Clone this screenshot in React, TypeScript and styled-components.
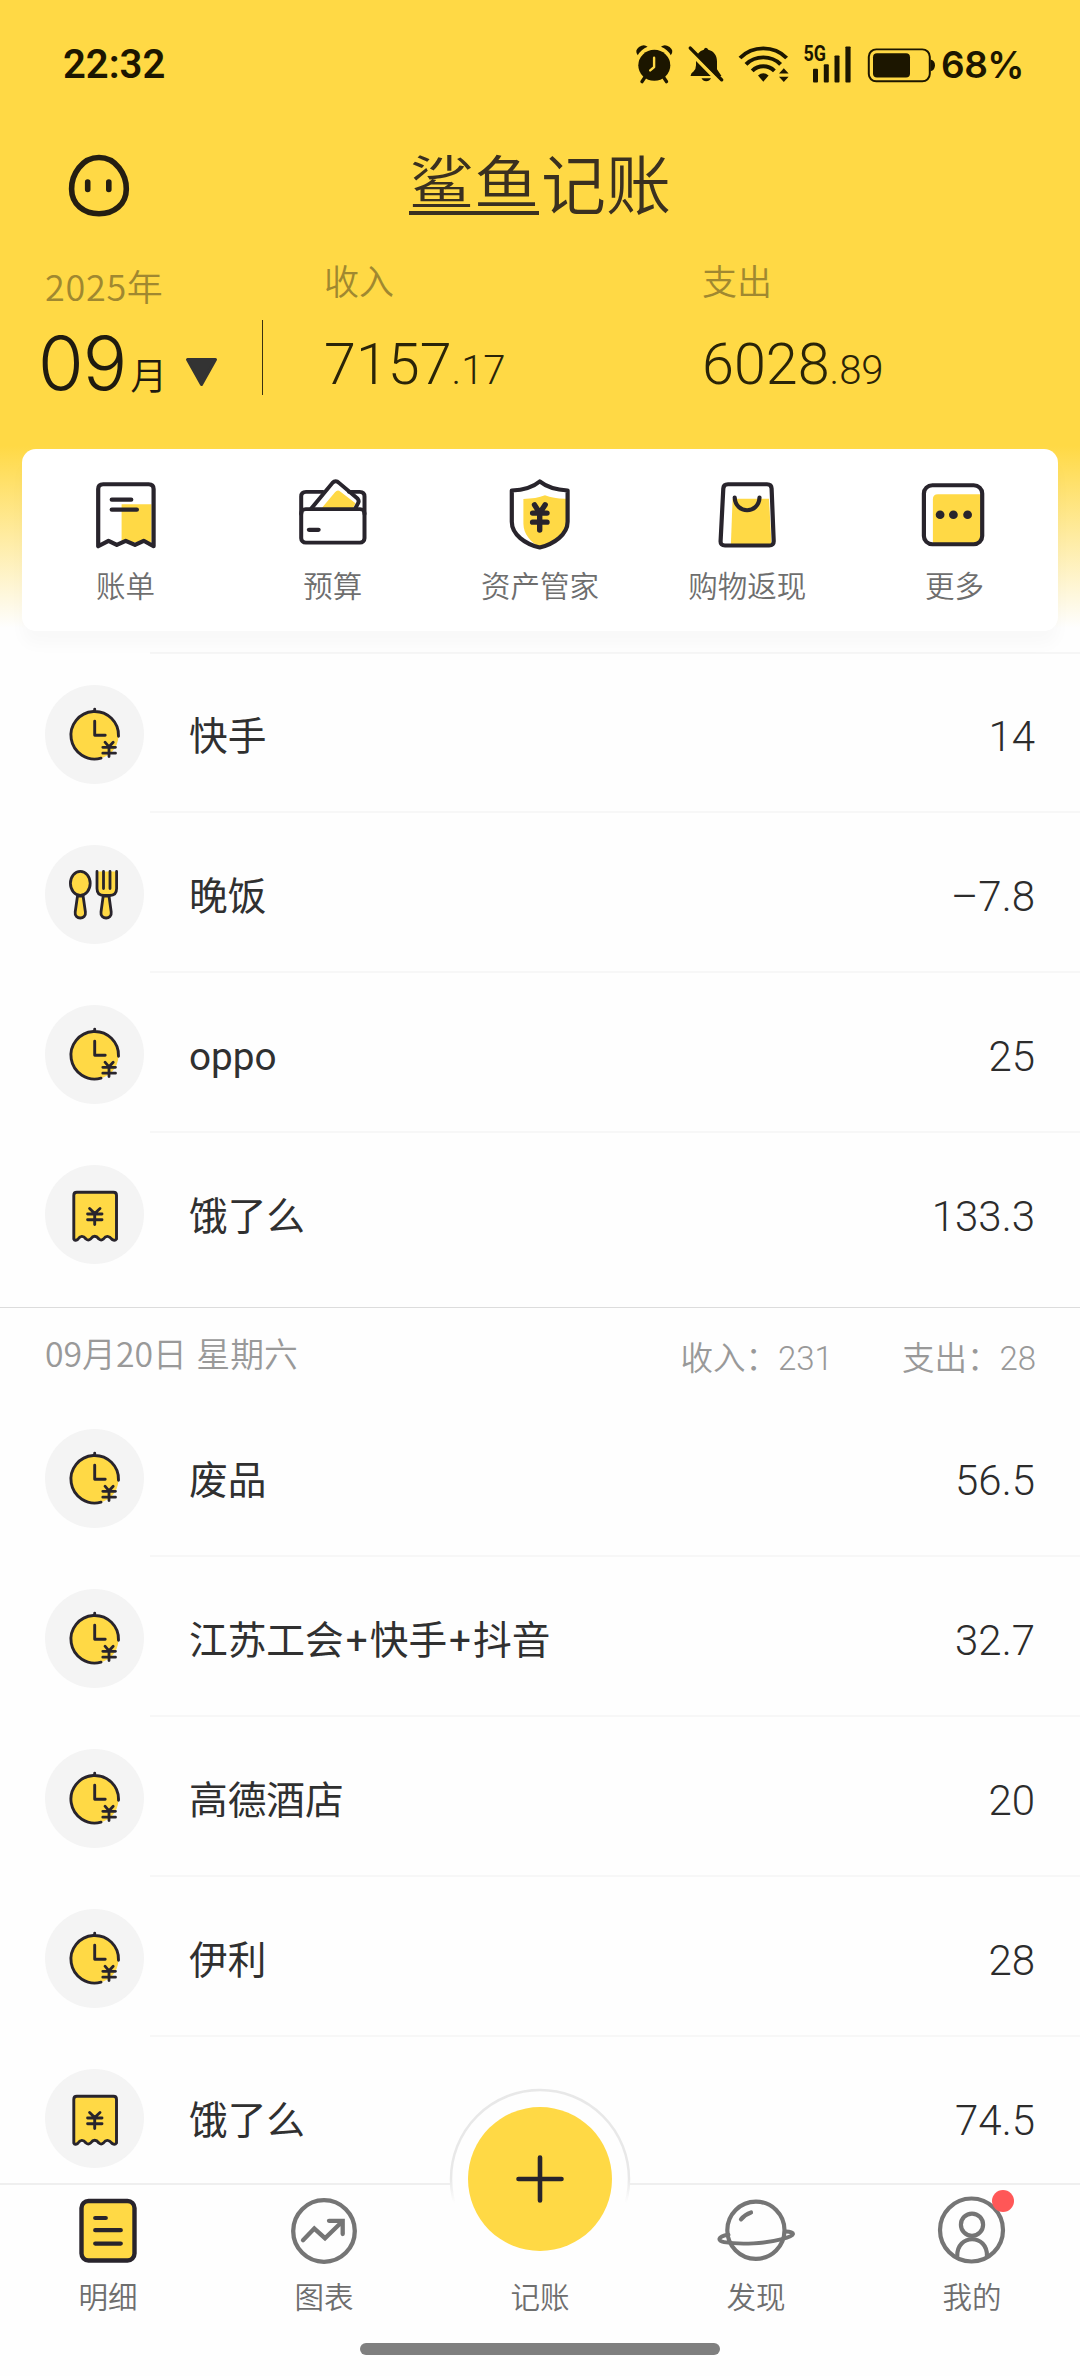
import React from "react";
import styled, { createGlobalStyle } from "styled-components";

const YELLOW = "#ffd945";
const INK = "#28242c";
const GREY = "#757575";
const CJK = `"Noto Sans CJK SC", sans-serif`;
const NUM = `Roboto, "Noto Sans CJK SC", sans-serif`;

const GlobalStyle = createGlobalStyle`
  * { box-sizing: border-box; }
  body { margin: 0; background: #fefefe; font-family: ${CJK}; }
  svg { display: block; flex: none; overflow: visible; }
`;

const Screen = styled.div`
  width: 1080px;
  height: 2376px;
  display: flex;
  flex-direction: column;
  overflow: hidden;
  background: #fefefe;
  color: #333;
`;

const Header = styled.header`
  flex: none;
  height: 631px;
  display: flex;
  flex-direction: column;
  background: linear-gradient(${YELLOW} 0, ${YELLOW} 446px, #fefefe 628px);
`;

const StatusBar = styled.div`
  height: 128px;
  padding: 0 58px 0 63px;
  display: flex;
  align-items: center;
  justify-content: space-between;
  color: #1c1600;
  font-family: ${NUM};
`;

const Clock = styled.span`
  padding-top: 1px;
  font-size: 40px;
  line-height: 44px;
  font-weight: 600;
`;

const StatusIcons = styled.div`
  display: flex;
  align-items: center;
  gap: 10px;
`;

const Percent = styled.span`
  margin-left: -5px;
  width: 81px;
  padding-top: 1px;
  font-family: Inter, sans-serif;
  font-size: 37px;
  line-height: 46px;
  font-weight: 600;
  letter-spacing: -0.5px;
  white-space: nowrap;
`;

const TitleBar = styled.div`
  height: 113px;
  padding: 0 67px;
  display: grid;
  grid-template-columns: 64px 1fr 64px;
  align-items: center;
`;

const Title = styled.h1`
  margin: 0 0 4px;
  display: flex;
  justify-content: center;
  font-size: 65px;
  line-height: 60px;
  font-weight: 350;
  color: #3a3020;
`;

const Underlined = styled.span`
  height: 64px;
  margin-right: 2px;
  border-bottom: 4px solid #3a3020;
`;

const Squat = styled.span`
  display: block;
  transform: scaleY(0.9);
  transform-origin: 50% 4px;
`;

const Summary = styled.div`
  height: 208px;
  display: grid;
  grid-template-columns: 262px 1px 61px 378px 1fr;
`;

const Caption = styled.div<{ $size: number; $spacing?: number }>`
  font-size: ${(p) => p.$size}px;
  letter-spacing: ${(p) => p.$spacing ?? 0}px;
  line-height: 48px;
  font-weight: 350;
  color: #a08830;
`;

const MonthPicker = styled.div`
  padding: 20px 0 0 45px;
`;

const MonthRow = styled.div`
  display: flex;
  align-items: baseline;
  margin: 14px 0 0 -7px;
  line-height: 80px;
  color: #1f1b10;
`;

const MonthNumber = styled.span`
  font-family: Inter, sans-serif;
  font-size: 74px;
  font-weight: 350;
  letter-spacing: -1px;
`;

const MonthUnit = styled.span`
  margin-left: 4px;
  font-size: 37px;
  font-weight: 350;
`;

const Caret = styled.svg`
  margin-left: 18px;
`;

const Rule = styled.div`
  height: 75px;
  margin-top: 79px;
  background: #3a3010;
`;

const Figure = styled.div`
  padding-top: 15px;
`;

const Money = styled.div`
  margin-top: 29px;
  font-family: ${NUM};
  font-size: 57.5px;
  line-height: 64px;
  font-weight: 300;
  color: #2a2408;
`;

const Cents = styled.span`
  font-size: 40px;
`;

const Card = styled.nav`
  flex: none;
  height: 182px;
  margin: 0 22px;
  padding-top: 30px;
  display: grid;
  grid-template-columns: repeat(5, 1fr);
  border-radius: 14px;
  background: #fff;
  box-shadow: 0 14px 16px rgba(0, 0, 0, 0.025);
  position: relative;
`;

const Shortcut = styled.div`
  display: flex;
  flex-direction: column;
  align-items: center;
  gap: 13px;
`;

const Label = styled.span`
  font-size: 29.5px;
  line-height: 44px;
  font-weight: 350;
  color: #6e6e6e;
`;

const List = styled.main`
  flex: 1;
  min-height: 0;
  overflow: hidden;
  padding-top: 22px;
`;

const Group = styled.section`
  padding-bottom: 14px;
  border-bottom: 1px solid #dcdcdc;
`;

const Row = styled.div`
  height: 160px;
  padding-left: 45px;
  display: flex;
`;

const Badge = styled.div`
  flex: none;
  width: 99px;
  height: 99px;
  margin-top: 32px;
  border-radius: 50%;
  background: #f4f4f4;
`;

const RowBody = styled.div`
  flex: 1;
  margin-left: 6px;
  padding: 0 45px 0 39px;
  display: flex;
  align-items: center;
  justify-content: space-between;
  border-bottom: 2px solid #f7f7f7;
  ${Row}:last-child > & { border-color: transparent; }
`;

const TopRule = styled.div`
  height: 2px;
  margin: -1px 0 -1px 150px;
  background: #f6f6f6;
`;

const Name = styled.span`
  padding-top: 9px;
  font-size: 38.7px;
  line-height: 56px;
  font-weight: 400;
  color: #303030;
  font-family: ${NUM};
`;

const Plus = styled.span`
  padding: 0 2px;
`;

const Amount = styled.span`
  padding-top: 9px;
  font-family: ${NUM};
  font-size: 42px;
  font-weight: 300;
  color: #2c2c2c;
`;

const DayHeader = styled.div`
  height: 89px;
  padding: 0 44px 0 45px;
  display: flex;
  align-items: center;
  color: #999;
  font-weight: 350;
`;

const DayName = styled.span`
  flex: 1;
  font-size: 33.8px;
  word-spacing: 2px;
`;

const DayTotal = styled.span`
  margin-left: 69px;
  padding-top: 5px;
  font-size: 32.5px;
`;

const DayValue = styled.span`
  font-family: ${NUM};
  font-size: 33px;
  font-weight: 300;
`;

const TabBar = styled.footer`
  flex: none;
  height: 193px;
  border-top: 2px solid #efefef;
  background: #fefefe;
  position: relative;
`;

const Tabs = styled.div`
  height: 158px;
  display: grid;
  grid-template-columns: repeat(5, 1fr);
`;

const Tab = styled.div`
  padding-top: 10px;
  display: flex;
  flex-direction: column;
  align-items: center;
  gap: 6px;
  position: relative;
`;

const AddButton = styled.div`
  height: 72px;
  width: 184px;
  position: relative;
  & > svg { position: absolute; left: 0; bottom: -4px; }
`;

const RedDot = styled.i`
  position: absolute;
  left: 128px;
  top: 5px;
  width: 22px;
  height: 22px;
  border-radius: 50%;
  background: #ff5757;
`;

const HomeIndicator = styled.div`
  width: 360px;
  height: 12px;
  margin: 0 auto;
  border-radius: 6px;
  background: #7f7f7f;
`;

const line = (w: number, color = INK) => ({
  fill: "none",
  stroke: color,
  strokeWidth: w,
  strokeLinecap: "round" as const,
  strokeLinejoin: "round" as const,
});

const status = (w: number) => ({
  width: w,
  height: 42.6,
  viewBox: `0 0 ${w} 44`,
  preserveAspectRatio: "none",
  fill: "#1c1600",
});

const shortcut = {
  width: 72,
  height: 70,
  viewBox: "0 0 72 72",
  preserveAspectRatio: "none",
};

const Alarm = () => (
  <svg {...status(42)}>
    <circle cx="20.3" cy="23.1" r="16" />
    <path d="M3.8 12.6Q.2 8 5 4.2Q10 .8 13.6 4Q7 7 3.8 12.6ZM36.8 12.6Q40.4 8 35.6 4.2Q30.6 .8 27 4Q33.6 7 36.8 12.6Z" />
    <path d="M10.5 36L8 40M30 36L32.5 40" {...line(3.4, "#1c1600")} />
    <path d="M20.1 15.2V24.9L16.2 28.3" {...line(2.4, YELLOW)} />
  </svg>
);

const Muted = () => (
  <svg {...status(41)}>
    <path d="M19.9 4.8Q21.8 5 22.3 7C28 8.4 31 13 31 19V27L35.5 34.2H4.5Q5 31 7.5 29.5Q10 27 10 23V17Q11 9 17.8 7Q18 5 19.9 4.8Z" />
    <path d="M15.5 36.5H25Q23.5 39.6 20.2 39.6Q17 39.6 15.5 36.5Z" />
    <path d="M-.5 4.5L32.5 39.5" {...line(4, YELLOW)} />
    <path d="M4.3 5.2L35.7 38" {...line(3.4, "#1c1600")} />
  </svg>
);

const Wifi = () => (
  <svg {...status(53)}>
    <g {...line(4, "#1c1600")} strokeLinecap="butt">
      <path d="M3 15.5Q12.5 5.6 26.3 5.6T49.6 15.5" />
      <path d="M9 22Q16 14.8 26.3 14.8T43.6 22" />
      <path d="M15.2 28.7Q20 24 26.3 24T37.4 28.7" />
    </g>
    <path d="M21 33.7Q26.3 28.6 31.6 33.7L26.3 40Z" />
    <path d="M42 31.4L46.8 26L51.6 31.4ZM42 34.8H51.6L46.8 40.4Z" />
  </svg>
);

const Signal = () => (
  <svg {...status(56)}>
    <text x="3.6" y="18.8" fontSize="22" fontWeight="700" fontFamily="Roboto, sans-serif" textLength="22.5" lengthAdjust="spacingAndGlyphs">5G</text>
    <rect x="13" y="26.6" width="5" height="14.2" rx="1" />
    <rect x="23.8" y="22" width="5" height="18.8" rx="1" />
    <rect x="34.5" y="12.8" width="5" height="28" rx="1" />
    <rect x="45.4" y="3.5" width="5.2" height="37.3" rx="1" />
  </svg>
);

const Battery = () => (
  <svg {...status(70)}>
    <rect x="2.8" y="6.6" width="61" height="33" rx="7.5" fill="none" stroke="#1c1600" strokeWidth="2" />
    <rect x="7" y="10.6" width="37" height="25" rx="4" />
    <path d="M64.5 17Q69 18 69 23.1T64.5 29.2Z" />
  </svg>
);

const Face = () => (
  <svg width="64" height="64" viewBox="0 0 64 66" preserveAspectRatio="none" {...line(5.6, "#241e12")}>
    <path d="M32 4.7C49 4.7 59.3 22 59.3 37C59.3 53 47 62.6 32 62.6C17 62.6 4.6 53 4.6 37C4.6 22 15 4.7 32 4.7Z" />
    <path d="M20.7 29.8V37.7M41.8 29.8V37.7" />
  </svg>
);

const Bill = () => (
  <svg {...shortcut}>
    <path d="M31.6 26H61.5V65H31.6Z" fill={YELLOW} />
    <path d="M8.2 69.2V10.4Q8.2 5.4 13.2 5.4H58.6Q63.6 5.4 63.6 10.4V69.2L53.7 63.6L45 67.8L35.7 63.6L26.8 67.8L18.5 63.6Z" {...line(4.2)} />
    <path d="M21.8 21.3H41.2M21.8 31.6H46.8" {...line(4.4)} />
  </svg>
);

const Wallet = () => (
  <svg {...shortcut}>
    <path d="M25 29.5L38 13.5Q40.7 10.5 43.5 13L58.5 25L56 30Z" fill={YELLOW} />
    <g {...line(4)}>
      <path d="M4.2 36V18Q4.2 13.2 9 13.2H26M52 13.2H62.7Q67.5 13.2 67.5 18V36" />
      <rect x="4.2" y="31" width="63.3" height="34.4" rx="4.5" />
      <path d="M14.5 30L35.5 4Q38.6 .6 42 4L60.5 20Q62.5 22.5 61 25L58.6 29.6" />
    </g>
    <path d="M12 52.3H21.5" {...line(4.4)} />
  </svg>
);

const Shield = () => (
  <svg {...shortcut}>
    <path d="M19.4 20.5Q32 20.5 41 16.8Q50 20.5 62 20.3V45C62 57 49 66 36 70C27 65 19.4 57 19.4 46Z" fill={YELLOW} />
    <path d="M7.8 11.8Q26 11 35.7 2.5Q46 11 63.6 11.8V44C63.6 57 50 67 35.7 70.4C21 67 7.8 57 7.8 44Z" {...line(4.2)} />
    <path d="M30.5 26.5L35.7 35L41.2 26.5M28.6 35H43M28.6 44.4H43M35.7 35V52.5" {...line(5.4)} />
  </svg>
);

const Bag = () => (
  <svg {...shortcut}>
    <path d="M21.6 20.3H58L60.5 67H19.9Z" fill={YELLOW} />
    <path d="M17 5.4H56Q60.4 5.4 60.6 9.8L62.7 63.8Q62.8 68.4 58.2 68.4H14Q9.4 68.4 9.6 63.8L12.3 9.8Q12.5 5.4 17 5.4Z" {...line(4.2)} />
    <path d="M23.7 19C24.5 36.5 47.7 36.5 48.5 19" {...line(4.2)} />
  </svg>
);

const More = () => (
  <svg {...shortcut}>
    <path d="M14.9 66V21Q14.9 15.8 20 15.8H63V66Z" fill={YELLOW} />
    <rect x="5.9" y="6.4" width="58.3" height="60.8" rx="8.5" {...line(4.2)} />
    <g fill={INK}>
      <circle cx="22.1" cy="36.8" r="4.4" />
      <circle cx="35.4" cy="36.8" r="4.4" />
      <circle cx="49.6" cy="36.8" r="4.4" />
    </g>
  </svg>
);

const PartTime = () => (
  <svg width="99" height="99">
    <circle cx="49.7" cy="50.3" r="23.8" fill={YELLOW} />
    <path d="M73.5 51.3A23.8 23.8 0 1 0 56 73.2M49.7 26V24.2M49.7 36.2V50.3H60.2" {...line(2.9)} />
    <path d="M60 57.2L64 61.8L68.2 57.2M57.8 62.3H70.5M57.8 68.2H70.5M64 62V71.5" {...line(2.8)} />
  </svg>
);

const Meal = () => (
  <svg width="99" height="99">
    <g {...line(2.8)} fill={YELLOW}>
      <path d="M32.5 51L30.2 67C29 75 41.6 75 40.4 67L38.1 51Z" />
      <ellipse cx="35.3" cy="38.3" rx="9.9" ry="12" />
      <path d="M58.2 51L56 67C54.8 75 67.4 75 66.2 67L64 51Z" />
      <path d="M52 26.5V43.5Q52 50.5 59 50.5H64.6Q71.6 50.5 71.6 43.5V26.5" />
      <path d="M58.5 26.5V43.5M65 26.5V43.5" />
    </g>
  </svg>
);

const Voucher = () => (
  <svg width="99" height="99">
    <path
      d="M28.8 74V30.2Q28.8 27.2 31.8 27.2H68.5Q71.5 27.2 71.5 30.2V74Q70 76.3 67.2 74.5Q62.3 68.5 58.4 74Q56.2 76 53.9 74Q49.7 68.5 45.6 74Q43.3 76 41 74Q36.7 68.5 32.6 74.5Q30 76.3 28.8 74Z"
      {...line(2.9)}
      fill={YELLOW}
    />
    <path d="M44.6 43.5L49.7 48.5L55 43.5M42.6 49H57M42.6 54.8H57M49.7 49V59.6" {...line(2.9)} />
  </svg>
);

const DetailTab = () => (
  <svg width="72" height="72">
    <rect x="9.5" y="6" width="53" height="59.5" rx="7" {...line(4.4)} fill={YELLOW} />
    <path d="M23.2 23H33.8M23.2 35.2H48.8M23.2 48.6H48.8" {...line(4.2)} />
  </svg>
);

const ChartTab = () => (
  <svg width="72" height="72" {...line(4.3, GREY)}>
    <circle cx="36" cy="36" r="30.8" />
    <path d="M15 45.3L26.3 33.6L37 43.2L54.5 26.3M41 25.8H54.7V39" strokeLinejoin="miter" />
  </svg>
);

const AddIcon = () => (
  <svg width="184" height="184">
    <defs>
      <linearGradient id="ring" x1="0" y1="0" x2="0" y2="184" gradientUnits="userSpaceOnUse">
        <stop offset=".5" stopColor="#e8e8e8" />
        <stop offset=".63" stopColor="#fefefe" />
      </linearGradient>
    </defs>
    <circle cx="92" cy="92" r="89" fill="#fefefe" stroke="url(#ring)" strokeWidth="2.5" />
    <circle cx="92" cy="92" r="72" fill={YELLOW} />
    <path d="M92 70.5V113.5M70.5 92H113.5" {...line(4.6)} />
  </svg>
);

const DiscoverTab = () => (
  <svg width="80" height="72" {...line(4.2, GREY)}>
    <circle cx="39.9" cy="35.2" r="28.6" />
    <path d="M12.5 39.7C1 41.5 1.5 46 8 47.2C25 50 50 48.5 66 44.2C80 40.5 80 37 69.5 36.5" strokeWidth="3.9" />
    <path d="M25 24.3Q29 19.5 35 17.5" />
  </svg>
);

const MineTab = () => (
  <svg width="72" height="72" {...line(4.2, GREY)}>
    <circle cx="35.5" cy="35" r="31.5" />
    <circle cx="36" cy="29.7" r="11.1" />
    <path d="M21.2 61.5C20.5 38.5 51.8 38.5 51 61.5" />
  </svg>
);

const shortcuts: [string, React.FC][] = [
  ["账单", Bill],
  ["预算", Wallet],
  ["资产管家", Shield],
  ["购物返现", Bag],
  ["更多", More],
];

type Entry = { icon: React.FC; name: string; amount: string };

const previousDay: Entry[] = [
  { icon: PartTime, name: "快手", amount: "14" },
  { icon: Meal, name: "晚饭", amount: "–7.8" },
  { icon: PartTime, name: "oppo", amount: "25" },
  { icon: Voucher, name: "饿了么", amount: "133.3" },
];

const saturday: Entry[] = [
  { icon: PartTime, name: "废品", amount: "56.5" },
  { icon: PartTime, name: "江苏工会+快手+抖音", amount: "32.7" },
  { icon: PartTime, name: "高德酒店", amount: "20" },
  { icon: PartTime, name: "伊利", amount: "28" },
  { icon: Voucher, name: "饿了么", amount: "74.5" },
];

const Entries = ({ items }: { items: Entry[] }) => (
  <>
    {items.map(({ icon: Icon, name, amount }) => (
      <Row key={name}>
        <Badge>
          <Icon />
        </Badge>
        <RowBody>
          <Name>
            {name.split("+").map((part, i) => (
              <React.Fragment key={i}>
                {i > 0 && <Plus>+</Plus>}
                {part}
              </React.Fragment>
            ))}
          </Name>
          <Amount>{amount}</Amount>
        </RowBody>
      </Row>
    ))}
  </>
);

export default function App() {
  return (
    <Screen>
      <GlobalStyle />
      <Header>
        <StatusBar>
          <Clock>22:32</Clock>
          <StatusIcons>
            <Alarm />
            <Muted />
            <Wifi />
            <Signal />
            <Battery />
            <Percent>68%</Percent>
          </StatusIcons>
        </StatusBar>
        <TitleBar>
          <Face />
          <Title>
            <Underlined>
              <Squat>鲨鱼</Squat>
            </Underlined>
            记账
          </Title>
        </TitleBar>
        <Summary>
          <MonthPicker>
            <Caption $size={36} $spacing={0.7}>2025年</Caption>
            <MonthRow>
              <MonthNumber>09</MonthNumber>
              <MonthUnit>月</MonthUnit>
              <Caret width="32" height="32">
                <path d="M2.5 1.5H30.5L16.5 26.5Z" fill="#333" stroke="#333" strokeWidth="3" strokeLinejoin="round" />
              </Caret>
            </MonthRow>
          </MonthPicker>
          <Rule />
          <span />
          <Figure>
            <Caption $size={35}>收入</Caption>
            <Money>
              7157<Cents>.17</Cents>
            </Money>
          </Figure>
          <Figure>
            <Caption $size={35}>支出</Caption>
            <Money>
              6028<Cents>.89</Cents>
            </Money>
          </Figure>
        </Summary>
        <Card>
          {shortcuts.map(([name, Icon]) => (
            <Shortcut key={name}>
              <Icon />
              <Label>{name}</Label>
            </Shortcut>
          ))}
        </Card>
      </Header>
      <List>
        <TopRule />
        <Group>
          <Entries items={previousDay} />
        </Group>
        <DayHeader>
          <DayName>09月20日 星期六</DayName>
          <DayTotal>
            收入：<DayValue>231</DayValue>
          </DayTotal>
          <DayTotal>
            支出：<DayValue>28</DayValue>
          </DayTotal>
        </DayHeader>
        <section>
          <Entries items={saturday} />
        </section>
      </List>
      <TabBar>
        <Tabs>
          <Tab>
            <DetailTab />
            <Label>明细</Label>
          </Tab>
          <Tab>
            <ChartTab />
            <Label>图表</Label>
          </Tab>
          <Tab>
            <AddButton>
              <AddIcon />
            </AddButton>
            <Label>记账</Label>
          </Tab>
          <Tab>
            <DiscoverTab />
            <Label>发现</Label>
          </Tab>
          <Tab>
            <MineTab />
            <RedDot />
            <Label>我的</Label>
          </Tab>
        </Tabs>
        <HomeIndicator />
      </TabBar>
    </Screen>
  );
}
